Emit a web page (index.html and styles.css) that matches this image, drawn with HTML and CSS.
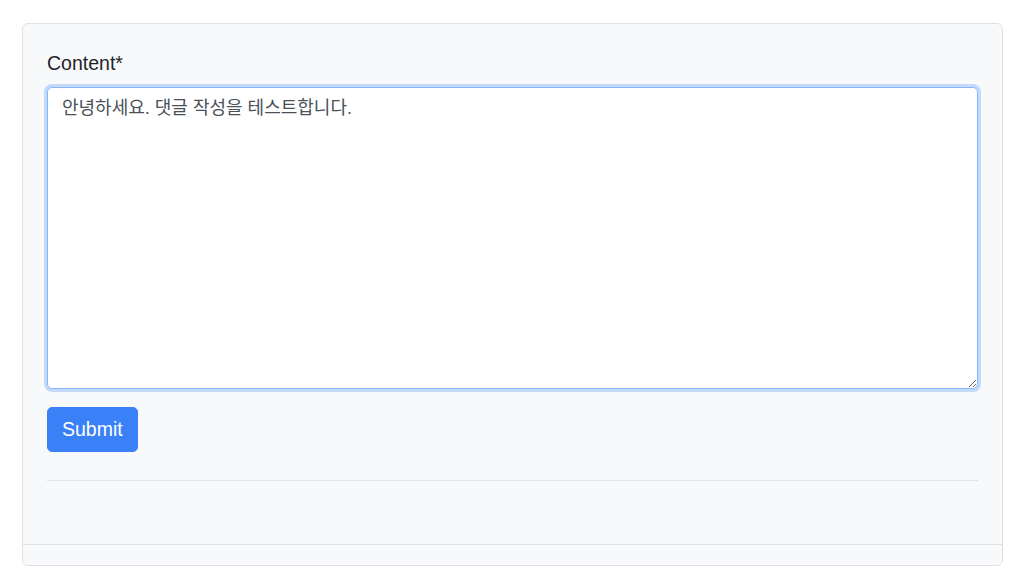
FILE: index.html
```html
<!DOCTYPE html>
<html lang="ko">
<head>
    <meta charset="UTF-8">
    <meta name="viewport" content="width=device-width, initial-scale=1.0">
    <title>Comment</title>
    <link rel="stylesheet" href="styles.css">
</head>
<body>

    <div class="card">
        <div class="card-body">
            <form class="comment-form">
                <label class="form-label" for="content">Content*</label>
                <textarea class="form-control" id="content" name="content">안녕하세요. 댓글 작성을 테스트합니다.</textarea>
                <div class="form-actions">
                    <button type="submit" class="btn-primary">Submit</button>
                </div>
            </form>
            <hr class="divider">
        </div>
        <div class="card-footer"></div>
    </div>

</body>
</html>
```

FILE: styles.css
```css
body {
    margin: 0;
    padding: 23px 21px 18px 22px;
    font-family: "Liberation Sans", "Noto Sans CJK KR", Arial, sans-serif;
    font-size: 18px;
    color: #212529;
    background: #fff;
}
.card {
    border: 1px solid #dfe1e4;
    border-radius: 6px;
    background-color: #f8f9fa;
    overflow: hidden;
}
.card-body {
    padding: 24px 24px 24px 24px;
}
.comment-form {
    display: flex;
    flex-direction: column;
}
.form-label {
    display: block;
    font-size: 19.5px;
    line-height: 27px;
    margin-top: 2px;
    margin-bottom: 10px;
}
.form-control {
    display: block;
    box-sizing: border-box;
    width: 100%;
    height: 302px;
    margin: 0;
    padding: 7px 14px 6px;
    font-family: inherit;
    font-size: 18px;
    line-height: 27px;
    color: #495057;
    background-color: #fff;
    border: 1px solid #86b7fe;
    border-radius: 5px;
    box-shadow: 0 0 0 3px rgba(13, 110, 253, 0.22);
    outline: none;
    resize: vertical;
}
.form-actions {
    margin-top: 18px;
}
.btn-primary {
    padding: 8px 14px;
    font-family: inherit;
    font-size: 19.5px;
    line-height: 27px;
    color: #fff;
    background-color: #3a80f6;
    border: 1px solid #3a80f6;
    border-radius: 5px;
    cursor: pointer;
}
.btn-primary:hover {
    background-color: #2b6fe0;
}
.divider {
    margin: 28px 0 39px;
    border: 0;
    border-top: 1px solid #e1e3e6;
}
.card-footer {
    height: 20px;
    border-top: 1px solid #dfe1e4;
    background-color: #f8f9fa;
}
```
